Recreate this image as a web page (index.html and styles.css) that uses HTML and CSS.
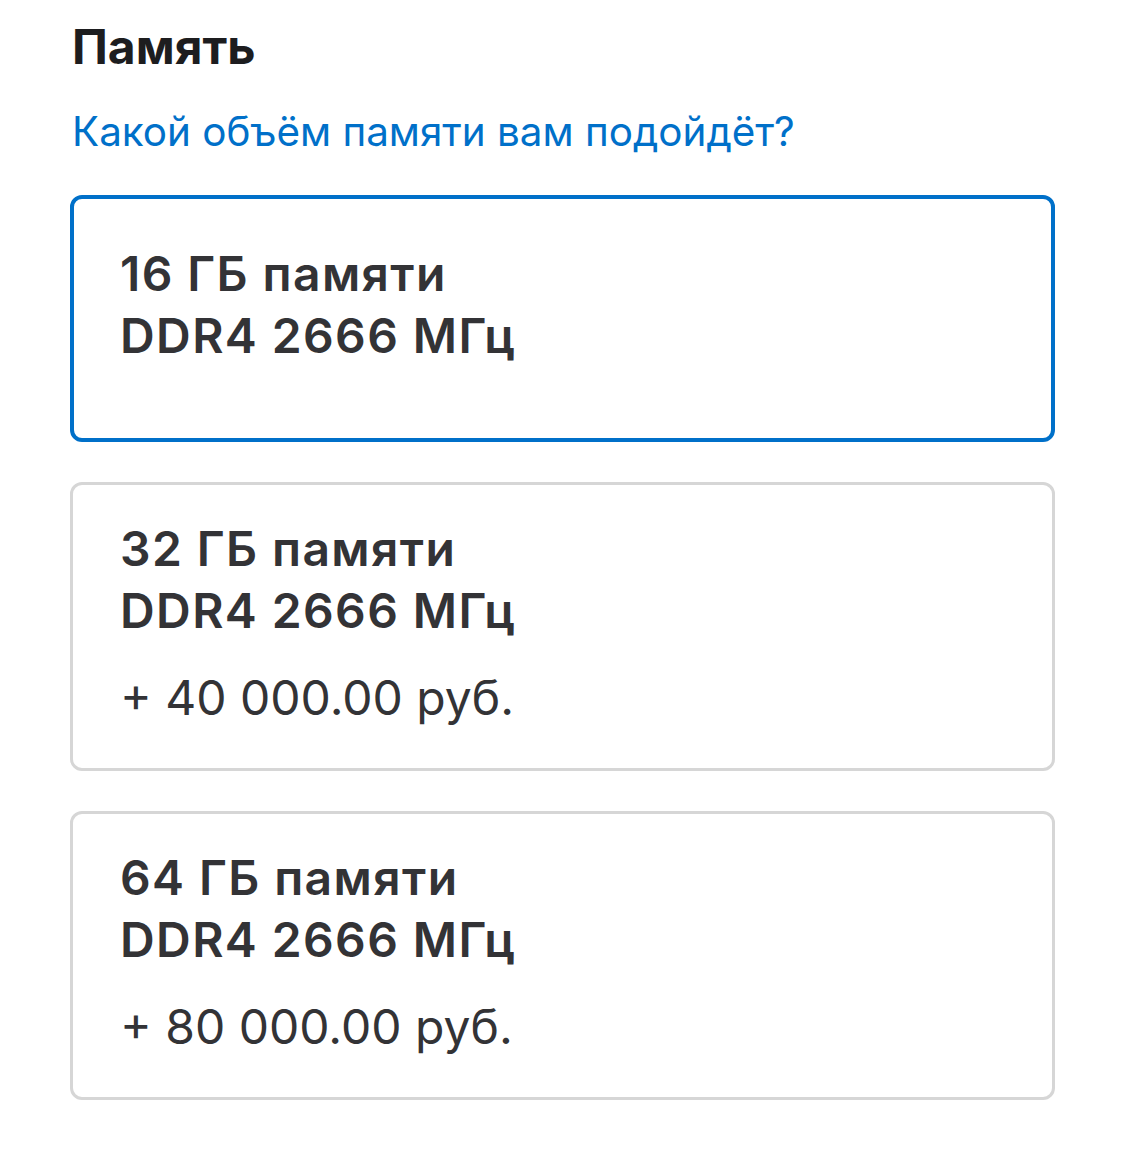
FILE: index.html
```html
<!DOCTYPE html>
<html lang="ru">
<head>
  <meta charset="UTF-8">
  <meta name="viewport" content="width=device-width, initial-scale=1.0">
  <title>Память</title>
  <link rel="stylesheet" href="styles.css">
</head>
<body>
  <section class="memory">
    <h1 class="memory-title">Память</h1>
    <a class="memory-help" href="#">Какой объём памяти вам подойдёт?</a>

    <div class="options">
      <div class="option option-selected">
        <div class="option-name">16 ГБ памяти<br>DDR4 2666 МГц</div>
      </div>

      <div class="option">
        <div class="option-name">32 ГБ памяти<br>DDR4 2666 МГц</div>
        <div class="option-price">+ 40 000.00 руб.</div>
      </div>

      <div class="option">
        <div class="option-name">64 ГБ памяти<br>DDR4 2666 МГц</div>
        <div class="option-price">+ 80 000.00 руб.</div>
      </div>
    </div>
  </section>
</body>
</html>
```

FILE: styles.css
```css
body {
  margin: 0;
  background-color: #ffffff;
  font-family: Inter, "Noto Sans", Arial, sans-serif;
  color: #333336;
}
.memory {
  width: 985px;
  padding: 18px 0 0 70px;
}
.memory-title {
  margin: 0 0 0 2px;
  font-size: 48px;
  line-height: 58px;
  font-weight: 700;
  color: #1d1d1f;
}
.memory-help {
  display: block;
  margin: 28px 0 0 2px;
  font-size: 40.4px;
  line-height: 56px;
  color: #0070c9;
  text-decoration: none;
}
.options {
  display: flex;
  flex-direction: column;
  gap: 40px;
  margin-top: 35px;
}
.option {
  border: 3px solid #d6d6d6;
  border-radius: 12px;
  padding: 33px 40px 39px 47px;
}
.option-selected {
  border: 4px solid #0070c9;
  padding: 44px 40px 71px 46px;
}
.option-name {
  font-size: 48px;
  line-height: 62px;
  font-weight: 600;
  letter-spacing: 1.4px;
}
.option-price {
  margin-top: 25px;
  font-size: 48px;
  line-height: 62px;
}
```
